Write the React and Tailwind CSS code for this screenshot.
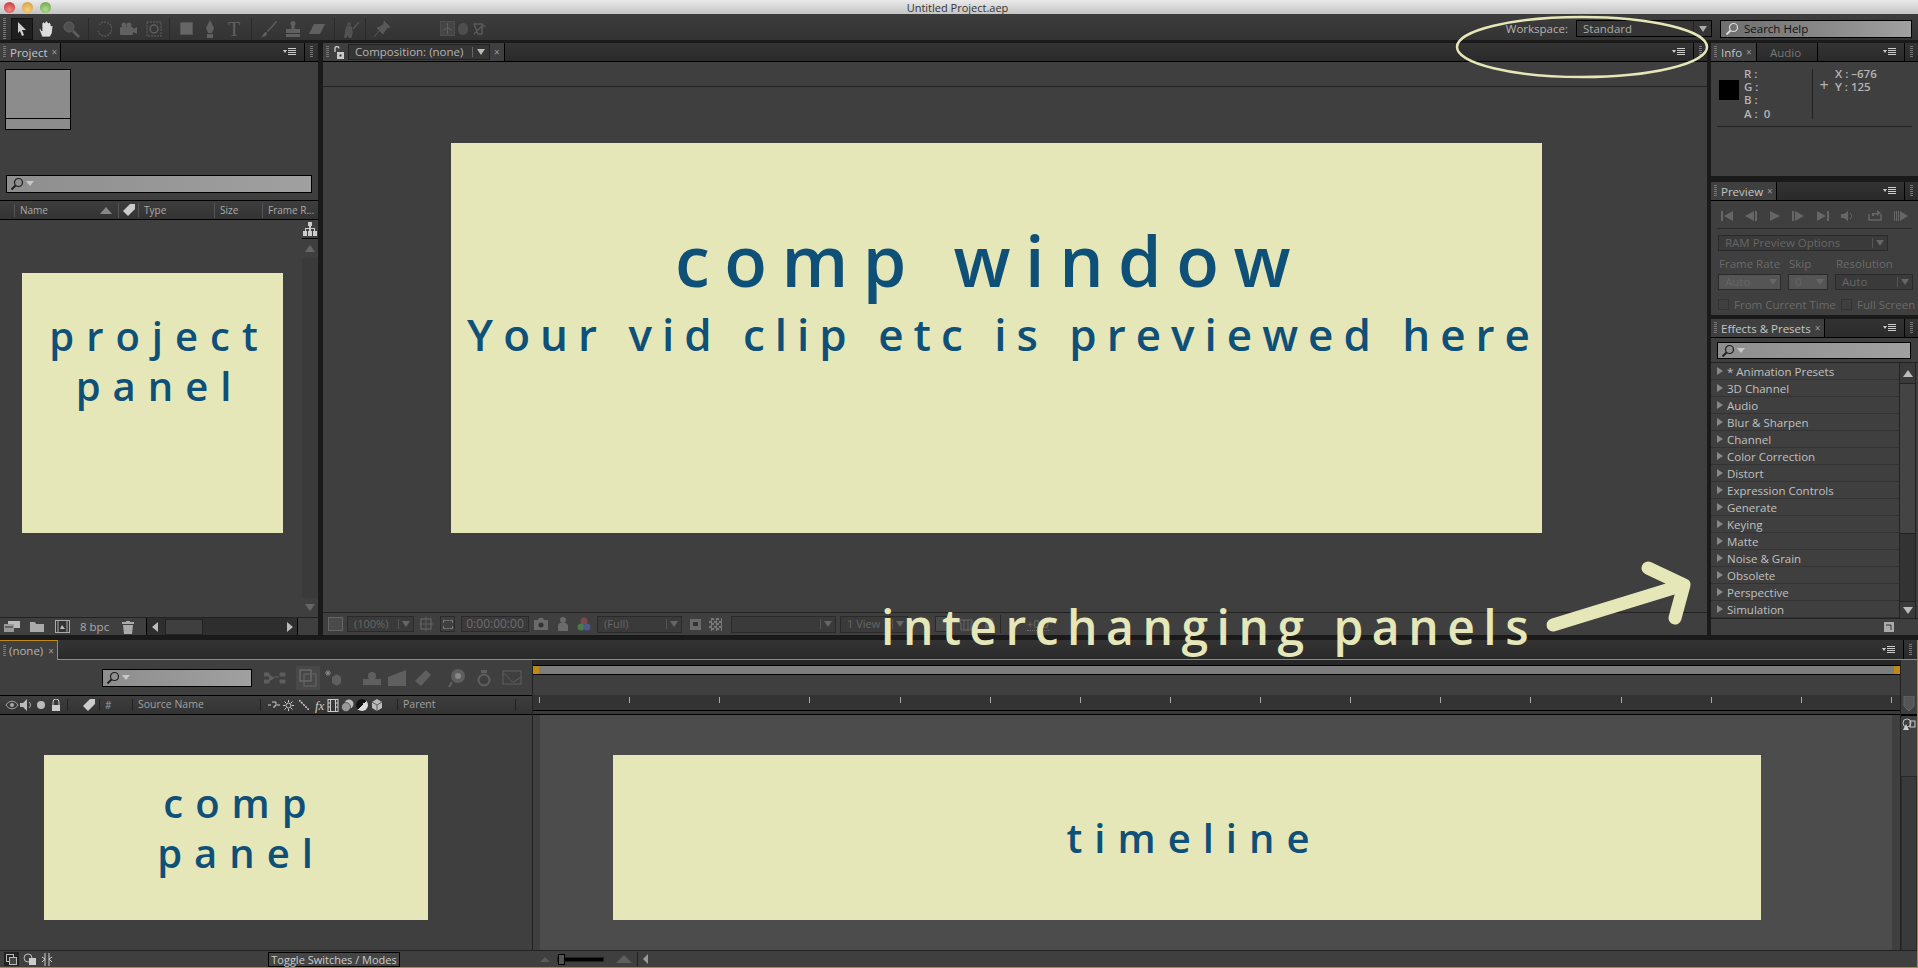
import React from "react";

const effects = ["* Animation Presets", "3D Channel", "Audio", "Blur & Sharpen", "Channel", "Color Correction", "Distort", "Expression Controls", "Generate", "Keying", "Matte", "Noise & Grain", "Obsolete", "Perspective", "Simulation"];
const ticks = Array.from({ length: 16 }, (_, i) => i);

function Grip({ className = "" }) {
  return <div className={"w-[3px] h-[12px] shrink-0 bg-[repeating-linear-gradient(to_bottom,#777_0,#777_1px,transparent_1px,transparent_2px)] " + className} />;
}

function PanelMenu() {
  return (
    <svg width="14" height="8" viewBox="0 0 14 8" className="shrink-0">
      <path d="M0 2h4L2 5z" fill="#ccc" />
      <path d="M5 .5h8M5 2.500h8M5 4.500h8M5 6.500h8" stroke="#ccc" strokeWidth="1" />
    </svg>
  );
}

function Magnifier({ color = "#1c1c1c" }) {
  return (
    <svg width="14" height="14" viewBox="0 0 14 14" className="shrink-0">
      <circle cx="8.500" cy="5.500" r="4" fill="none" stroke={color} strokeWidth="1.200" />
      <path d="M5.500 8.500L1.500 12.500" stroke={color} strokeWidth="1.800" />
    </svg>
  );
}

function SearchField({ className, caret = true, children }) {
  return (
    <div className={"flex items-center pl-[3px] gap-[2px] border border-black bg-gradient-to-r from-[#8e8e8e] to-[#a0a0a0] " + className}>
      <Magnifier />
      {caret && <svg width="8" height="6" viewBox="0 0 8 6"><path d="M0 0h8L4 5z" fill="#c8c8c8" /></svg>}
      {children}
    </div>
  );
}

function Caret({ color = "#8a8a8a", size = 8 }) {
  return <svg width={size} height={size} viewBox="0 0 8 8" className="shrink-0"><path d="M0 1h8L4 7z" fill={color} /></svg>;
}

function Select({ className, label, dim = false, disabled = false }) {
  return (
    <div className={"flex items-center border border-[#2a2a2a] " + (disabled ? "bg-[#555] " : "bg-[#3a3a3a] ") + className}>
      <span className={"flex-1 pl-[6px] truncate " + (dim ? "text-[#666]" : "text-[#aaa]")}>{label}</span>
      <span className="w-px h-[10px] bg-[#555]" />
      <span className="w-[14px] flex justify-center"><Caret color={dim ? "#666" : "#aaa"} /></span>
    </div>
  );
}

function TabBar({ children, menu = true, className = "" }) {
  return (
    <div className={"h-[19px] shrink-0 flex items-stretch bg-gradient-to-b from-[#333] to-[#2a2a2a] border-b border-black " + className}>
      {children}
      <div className="flex-1" />
      {menu && <div className="flex items-center pr-[7px] border-r border-black"><PanelMenu /></div>}
      {menu && <div className="flex items-center px-[5px]"><Grip /></div>}
    </div>
  );
}

function Tab({ label, className = "", active = true }) {
  return (
    <div className={"flex items-center pl-[3px] pr-[4px] border-r border-black " + (active ? "bg-[#3f3f3f] " : "") + className}>
      {active && <Grip className="mr-[4px]" />}
      <span className={"pt-[2px] text-[11.5px] font-medium whitespace-nowrap " + (active ? "text-[#c4c4c4]" : "text-[#777] pl-[10px] pr-[12px]")}>{label}</span>
      {active && <span className="ml-[4px] text-[#999] text-[10px] leading-none">×</span>}
    </div>
  );
}

function Tool({ children, className = "" }) {
  return <div className={"w-[24px] h-[22px] shrink-0 flex items-center justify-center " + className}>{children}</div>;
}

function Sep({ className = "" }) {
  return <div className={"w-px h-[22px] bg-[#2a2a2a] shrink-0 " + className} />;
}

function Toolbar() {
  const d = "#606060";
  return (
    <div className="h-[26px] shrink-0 flex items-center pt-[3px] bg-gradient-to-b from-[#3d3d3d] to-[#333] relative">
      <Grip className="ml-[3px] !h-[22px]" />
      <Tool className="ml-[5px] !w-[22px] bg-[#1f1f1f] border border-[#111]">
        <svg width="12" height="16" viewBox="0 0 12 16"><path d="M2 1l8 8H6l2 5-2 1-2-5-2 2z" fill="#cfcfcf" /></svg>
      </Tool>
      <Tool className="!w-[26px]">
        <svg width="16" height="18" viewBox="0 0 16 18"><path d="M4 17L1 9l1-1 2 3V3l1.500-1L7 3V1.500L8.500 1 10 2v1l1.500-.5L13 4v2l1-.5 1 1-1 7-2 3.500z" fill="#ddd" stroke="#222" strokeWidth=".7" /></svg>
      </Tool>
      <Tool><svg width="18" height="18" viewBox="0 0 18 18"><circle cx="7" cy="7" r="5" fill="#4f4f4f" stroke={d} /><path d="M11 11l6 6" stroke={d} strokeWidth="2.500" /></svg></Tool>
      <Sep className="ml-[5px]" />
      <Tool className="ml-[3px]"><svg width="16" height="16" viewBox="0 0 16 16"><path d="M3 4a7 7 0 1 1-1 6" fill="none" stroke="#555" strokeWidth="1.500" strokeDasharray="2 1" /></svg></Tool>
      <Tool><svg width="18" height="14" viewBox="0 0 18 14"><rect x="1" y="5" width="13" height="8" rx="1" fill={d} /><circle cx="5" cy="3" r="2.500" fill={d} /><circle cx="10" cy="3" r="2.500" fill={d} /><path d="M14 7l4-2v7l-4-2z" fill={d} /></svg></Tool>
      <Tool className="ml-[2px]"><svg width="18" height="18" viewBox="0 0 18 18"><rect x="2" y="2" width="14" height="14" fill="none" stroke={d} strokeDasharray="2 1" /><circle cx="9" cy="9" r="4" fill="none" stroke={d} strokeWidth="1.500" /></svg></Tool>
      <Sep className="ml-[3px]" />
      <Tool className="ml-[4px]"><div className="w-[13px] h-[13px] bg-[#666] border border-[#555]" /></Tool>
      <Tool><svg width="12" height="20" viewBox="0 0 12 20"><path d="M6 1l4 8-2 5H4L2 9z" fill={d} /><rect x="3" y="15" width="6" height="4" fill={d} /></svg></Tool>
      <Tool><span className="text-[20px] leading-none text-[#606060] font-['Liberation_Serif',serif]">T</span></Tool>
      <Sep className="ml-[5px]" />
      <Tool className="ml-[5px]"><svg width="18" height="18" viewBox="0 0 18 18"><path d="M16 1L7 11l1 1 9-10zM6 12c-2 0-2 3-5 5 3 0 6-1 6-4z" fill={d} /></svg></Tool>
      <Tool><svg width="16" height="18" viewBox="0 0 16 18"><circle cx="8" cy="3.500" r="2.500" fill={d} /><rect x="6.500" y="5" width="3" height="4" fill={d} /><rect x="1" y="9" width="14" height="4" fill={d} /><rect x="1" y="14" width="14" height="3" fill={d} /></svg></Tool>
      <Tool><svg width="18" height="12" viewBox="0 0 18 12"><path d="M6 1h11l-5 10H1z" fill={d} /></svg></Tool>
      <Sep className="ml-[5px]" />
      <Tool className="ml-[4px]"><svg width="18" height="18" viewBox="0 0 18 18"><circle cx="7" cy="4" r="2" fill="#505050" /><path d="M5 7h4l1 5-1 5H7l-1-5-2 5H3l1-6zM17 2l-6 7" stroke="#555" strokeWidth="1.500" fill="#505050" /></svg></Tool>
      <Sep className="ml-[2px]" />
      <Tool className="ml-[4px]"><svg width="18" height="18" viewBox="0 0 18 18"><path d="M11 1l6 6-3 1-3 4-1 2-6-6 3-1 4-3zM6 11l-5 6" fill="#585858" stroke="#585858" /></svg></Tool>
      <div className="ml-[46px] w-[15px] h-[15px] border border-[#4e4e4e] bg-[#454545] flex items-center justify-center shrink-0">
        <svg width="11" height="11" viewBox="0 0 12 12"><path d="M6 0v12M1 8l5-3 5 3" stroke="#636363" fill="none" /></svg>
      </div>
      <div className="ml-[3px] w-[10px] h-[12px] rounded-full bg-[#4e4e4e] shrink-0" />
      <svg width="14" height="14" viewBox="0 0 14 14" className="ml-[4px] shrink-0"><path d="M2 2h8v10H6zM10 2l3 3M2 12l8-8" stroke="#595959" fill="none" strokeWidth="1.500" /></svg>

      <div className="flex-1" />
      <span className="text-[#b4b4b4] mr-[8px] text-[11.5px] font-medium">Workspace:</span>
      <div className="w-[136px] h-[17px] flex items-center border border-black bg-[#353535] mr-[8px]">
        <span className="flex-1 pl-[6px] text-[#aaa] text-[11.5px]">Standard</span>
        <span className="w-px h-[15px] bg-[#222]" />
        <span className="w-[17px] flex justify-center"><Caret color="#aaa" /></span>
      </div>
      <div className="w-[192px] h-[18px] flex items-center border border-black bg-gradient-to-r from-[#6e6e6e] to-[#a0a0a0] mr-[6px] pl-[4px]">
        <Magnifier color="#ddd" />
        <span className="ml-[5px] text-[#111] text-[11.5px]">Search Help</span>
      </div>
    </div>
  );
}

function ProjectPanel() {
  return (
    <div className="w-[318px] shrink-0 flex flex-col bg-[#3f3f3f]">
      <TabBar><Tab label="Project" className="w-[61px]" /></TabBar>
      <div className="h-[138px] shrink-0 flex flex-col pl-[5px]">
        <div className="mt-[7px] w-[66px] h-[61px] border border-black bg-[#8c8c8c] flex flex-col justify-end">
          <div className="h-[11px] border-t border-black" />
        </div>
        <SearchField className="mt-[45px] ml-px w-[306px] h-[18px]" />
      </div>
      <div className="h-[20px] shrink-0 flex items-center border-y border-black bg-gradient-to-b from-[#3e3e3e] to-[#333] text-[#aaa] text-[10px]">
        <div className="w-[15px] h-[13px] border-r border-[#555]" />
        <div className="w-[104px] pl-[5px] flex items-center justify-between pr-[6px] border-r border-[#555]">
          <span>Name</span>
          <svg width="12" height="7" viewBox="0 0 12 7"><path d="M6 0l6 7H0z" fill="#888" /></svg>
        </div>
        <div className="w-[20px] flex justify-center border-r border-[#555]">
          <svg width="14" height="14" viewBox="0 0 14 14"><path d="M1 8l7-7h5v5l-7 7z" fill="#ccc" /></svg>
        </div>
        <div className="w-[76px] pl-[5px] border-r border-[#555]">Type</div>
        <div className="w-[48px] pl-[5px] border-r border-[#555]">Size</div>
        <div className="flex-1 pl-[5px] truncate">Frame R...</div>
      </div>
      <div className="flex-1 flex min-h-0">
        <div className="flex-1 pl-[22px] pt-[53px]">
          <div className="w-[261px] h-[260px] bg-[#e5e7b9] text-[#0f5078] font-semibold text-[40px] leading-[50px] tracking-[12px] text-center pl-[14px] pt-[38px] font-['Open_Sans',sans-serif]">
            project<br />panel
          </div>
        </div>
        <div className="w-[16px] shrink-0 flex flex-col">
          <div className="h-[19px] flex items-center justify-center text-[#ccc] border-b border-black">
            <svg width="14" height="14" viewBox="0 0 14 14"><path d="M5 0h4v4H8v2h4v3h2v5h-4V9h1V7H8v2h1v5H5V9h1V7H3v2h1v5H0V9h2V6h4V4H5z" fill="#ccc" /></svg>
          </div>
          <div className="h-[19px] flex items-center justify-center"><svg width="10" height="7" viewBox="0 0 10 7"><path d="M5 0l5 7H0z" fill="#666" /></svg></div>
          <div className="flex-1 bg-[#3a3a3a]" />
          <div className="h-[19px] flex items-center justify-center"><svg width="10" height="7" viewBox="0 0 10 7"><path d="M0 0h10L5 7z" fill="#666" /></svg></div>
        </div>
      </div>
      <div className="h-[18px] shrink-0 flex items-center border-t border-[#222] text-[#aaa] text-[11.5px]">
        <svg width="16" height="13" viewBox="0 0 16 13" className="ml-[4px]"><rect x="4" y="1" width="12" height="7" fill="#bbb" /><rect x="0" y="4" width="10" height="8" fill="#999" /><path d="M1 7h8" stroke="#333" /></svg>
        <svg width="14" height="11" viewBox="0 0 14 11" className="ml-[10px]"><path d="M0 1h5l1 2h8v8H0z" fill="#aaa" /></svg>
        <svg width="15" height="13" viewBox="0 0 15 13" className="ml-[11px]"><rect x=".5" y=".5" width="14" height="12" fill="#333" stroke="#aaa" /><path d="M3 1v11M12 1v11" stroke="#aaa" /><path d="M5 9l2-4 3 4z" fill="#bbb" /></svg>
        <span className="ml-[10px] w-[42px]">8 bpc</span>
        <svg width="12" height="14" viewBox="0 0 12 14"><path d="M4 1h4v1h4v2H0V2h4zM1 5h10l-1 9H2z" fill="#aaa" /></svg>
        <div className="ml-[12px] w-[152px] h-[17px] flex items-center bg-[#2e2e2e] border-x border-black">
          <svg width="6" height="10" viewBox="0 0 6 10" className="ml-[5px]"><path d="M6 0v10L0 5z" fill="#bbb" /></svg>
          <div className="ml-[7px] w-[38px] h-[16px] bg-[#3f3f3f] border border-[#222]" />
          <div className="flex-1" />
          <svg width="6" height="10" viewBox="0 0 6 10" className="mr-[4px]"><path d="M0 0v10l6-5z" fill="#bbb" /></svg>
        </div>
      </div>
    </div>
  );
}

function CompPanel() {
  const d = "#6a6a6a";
  return (
    <div className="w-[1384px] shrink-0 flex flex-col bg-[#3f3f3f]">
      <TabBar>
        <div className="w-[182px] flex items-center bg-[#3f3f3f] border-r border-black pl-[3px]">
          <Grip />
          <svg width="12" height="13" viewBox="0 0 12 13" className="ml-[4px]"><path d="M2 6V2.500a2 2 0 0 1 4 0" fill="none" stroke="#ccc" strokeWidth="1.300" /><rect x="4" y="6" width="7" height="7" fill="#ccc" /><rect x="6.500" y="8.500" width="2" height="2" fill="#333" /></svg>
          <div className="ml-[3px] w-[142px] h-[16px] flex items-center border border-[#222] bg-[#353535]">
            <span className="flex-1 pl-[6px] text-[#b4b4b4] text-[11.5px] whitespace-nowrap">Composition: (none)</span>
            <span className="w-px h-[10px] bg-[#666]" />
            <span className="w-[16px] flex justify-center"><Caret color="#bbb" /></span>
          </div>
          <span className="ml-[4px] text-[#999] text-[10px] leading-none">×</span>
        </div>
      </TabBar>
      <div className="h-[25px] shrink-0 border-b border-[#222]" />
      <div className="flex-1 min-h-0 pl-[128px] pt-[56px] border-b border-[#222]">
        <div className="w-[1091px] h-[390px] bg-[#e5e7b9] text-[#0f5078] text-center font-semibold font-['Open_Sans',sans-serif] pt-[69px]">
          <div className="text-[70px] leading-[96px] tracking-[14.5px] pr-[13px]">comp window</div>
          <div className="text-[44px] leading-[58px] tracking-[10px] whitespace-nowrap -mt-[3px] pl-[14px]">Your vid clip etc is previewed here</div>
        </div>
      </div>
      <div className="h-[22px] shrink-0 flex items-center text-[11px] text-[#6e6e6e]">
        <div className="ml-[5px] w-[15px] h-[14px] border border-[#666] bg-[#4a4a4a]" />
        <Select className="ml-[4px] w-[67px] h-[16px]" label="(100%)" dim />
        <svg width="14" height="14" viewBox="0 0 14 14" className="ml-[5px]"><rect x="2" y="2" width="10" height="10" fill="none" stroke={d} /><path d="M7 0v14M0 7h14" stroke={d} strokeWidth=".7" /></svg>
        <div className="ml-[7px] w-[15px] h-[16px] border border-[#2a2a2a] flex items-center justify-center"><div className="w-[10px] h-[9px] border border-dashed border-[#777]" /></div>
        <div className="ml-[6px] w-[68px] h-[16px] border border-[#2a2a2a] bg-[#3a3a3a] text-[12px] leading-[14px] text-center">0:00:00:00</div>
        <svg width="14" height="12" viewBox="0 0 14 12" className="ml-[5px]"><path d="M0 2h4l1-2h4l1 2h4v10H0z" fill={d} /><circle cx="7" cy="7" r="2.500" fill="#333" /></svg>
        <svg width="10" height="14" viewBox="0 0 10 14" className="ml-[10px]"><circle cx="5" cy="3" r="3" fill={d} /><path d="M0 14V8l2-2h6l2 2v6z" fill={d} /></svg>
        <svg width="14" height="14" viewBox="0 0 14 14" className="ml-[9px]"><circle cx="7" cy="4" r="3.500" fill="#7a4a4a" /><circle cx="4" cy="10" r="3.500" fill="#4a7a4a" /><circle cx="10" cy="10" r="3.500" fill="#4a5a8a" /></svg>
        <Select className="ml-[6px] w-[85px] h-[17px]" label="(Full)" dim />
        <div className="ml-[8px] w-[11px] h-[11px] bg-[#6a6a6a] flex items-center justify-center"><div className="w-[5px] h-[4px] bg-[#333]" /></div>
        <div className="ml-[8px] w-[13px] h-[13px] bg-[conic-gradient(#777_25%,#444_0_50%,#777_0_75%,#444_0)] bg-[length:5px_5px]" />
        <Select className="ml-[9px] w-[105px] h-[17px]" label="" dim />
        <Select className="ml-[4px] w-[68px] h-[17px]" label="1 View" dim />
        <div className="ml-[27px] w-[14px] h-[16px] border border-[#2a2a2a] bg-[#4a4a4a]" />
        <svg width="14" height="14" viewBox="0 0 14 14" className="ml-[10px]"><path d="M1 3h12v3h-1v7H2V6H1zM5 3v10M9 3v10" stroke={d} fill="none" /></svg>
        <div className="ml-[12px] w-[8px] h-[12px] bg-[#555]" />
        <div className="ml-[7px] w-px h-[18px] bg-[#2a2a2a]" />
        <span className="ml-[26px] border-b border-dotted border-[#6e6e6e] leading-[13px]">+0.0</span>
      </div>
    </div>
  );
}

function Transport() {
  const c = "#666";
  return (
    <div className="h-[28px] mx-[6px] flex items-center justify-between border-b border-[#2a2a2a] px-[4px] pt-[2px]">
      <svg width="12" height="10" viewBox="0 0 12 10"><path d="M0 0h2v10H0zM12 0v10L3 5z" fill={c} /></svg>
      <svg width="12" height="10" viewBox="0 0 12 10"><path d="M9 0v10L0 5zM10 0h2v10h-2z" fill={c} /></svg>
      <svg width="10" height="10" viewBox="0 0 10 10"><path d="M0 0l10 5-10 5z" fill={c} /></svg>
      <svg width="12" height="10" viewBox="0 0 12 10"><path d="M0 0h2v10H0zM3 0l9 5-9 5z" fill={c} /></svg>
      <svg width="12" height="10" viewBox="0 0 12 10"><path d="M0 0l9 5-9 5zM10 0h2v10h-2z" fill={c} /></svg>
      <svg width="14" height="10" viewBox="0 0 14 10"><path d="M0 3h3l4-3v10L3 7H0z" fill={c} /><path d="M9 2c2 2 2 4 0 6" stroke={c} fill="none" /></svg>
      <svg width="14" height="11" viewBox="0 0 14 11"><path d="M1 4v6h12V4" stroke={c} fill="none" strokeWidth="1.500" /><path d="M4 6V3h5V0l4 3-4 3V4.500H6V6z" fill={c} /></svg>
      <svg width="14" height="10" viewBox="0 0 14 10"><path d="M0 0h1v10H0zM2 0h1v10H2zM4 0h1v10H4zM6 0l8 5-8 5z" fill={c} /></svg>
    </div>
  );
}

function RightColumn() {
  return (
    <div className="w-[207px] shrink-0 flex flex-col">
      <div className="h-[133px] shrink-0 flex flex-col bg-[#3f3f3f]">
        <TabBar>
          <Tab label="Info" className="w-[46px]" />
          <Tab label="Audio" active={false} />
        </TabBar>
        <div className="mx-[6px] h-[65px] flex items-stretch border-b border-[#222] text-[#b4b4b4] text-[11.5px] font-semibold">
          <div className="w-[20px] h-[20px] bg-black mt-[18px] ml-[2px] shrink-0" />
          <div className="ml-[5px] w-[68px] pt-[5px] leading-[13px]">
            <div>R :</div><div>G :</div><div>B :</div><div className="mt-px">A :&nbsp; 0</div>
          </div>
          <div className="w-px h-[50px] bg-[#222] mt-[7px]" />
          <div className="w-[22px] flex justify-center pt-[15px] font-normal text-[16px] leading-none">+</div>
          <div className="pt-[5px] leading-[13px]"><div>X : –676</div><div>Y : 125</div></div>
        </div>
      </div>
      <div className="h-[133px] mt-[6px] shrink-0 flex flex-col bg-[#3f3f3f] text-[#6a6a6a] text-[11.5px]">
        <TabBar><Tab label="Preview" className="w-[66px]" /></TabBar>
        <Transport />
        <Select className="ml-[7px] mt-[6px] w-[170px] h-[16px]" label="RAM Preview Options" dim />
        <div className="flex ml-[8px] mt-[3px] h-[20px] items-center">
          <span className="w-[70px]">Frame Rate</span><span className="w-[47px]">Skip</span><span>Resolution</span>
        </div>
        <div className="flex ml-[7px]">
          <Select className="w-[63px] h-[16px]" label="Auto" dim disabled />
          <Select className="ml-[7px] w-[40px] h-[16px]" label="0" dim disabled />
          <Select className="ml-[7px] w-[78px] h-[16px]" label="Auto" dim />
        </div>
        <div className="flex items-center ml-[7px] mt-[6px]">
          <div className="w-[11px] h-[11px] border border-[#333]" />
          <span className="ml-[5px] w-[107px] whitespace-nowrap">From Current Time</span>
          <div className="w-[11px] h-[11px] border border-[#333]" />
          <span className="ml-[5px] whitespace-nowrap">Full Screen</span>
        </div>
      </div>
      <div className="h-[316px] mt-[4px] shrink-0 flex flex-col bg-[#3f3f3f]">
        <TabBar><Tab label="Effects & Presets" className="w-[114px]" /></TabBar>
        <div className="h-[25px] shrink-0 pl-[6px] pt-[4px] border-b border-[#222]">
          <SearchField className="w-[194px] h-[17px]" />
        </div>
        <div className="flex h-[255px] shrink-0">
          <div className="w-[188px] flex flex-col">
            {effects.map((name) => (
              <div key={name} className="h-[17px] shrink-0 flex items-center border-b border-[#333] text-[#c0c0c0] text-[11.5px] font-medium">
                <svg width="6" height="8" viewBox="0 0 6 8" className="ml-[6px] mr-[4px] shrink-0"><path d="M0 0l6 4-6 4z" fill="#888" /></svg>
                <span className="pt-[2px]">{name}</span>
              </div>
            ))}
          </div>
          <div className="w-[17px] flex flex-col border-x border-[#222] bg-[#333]">
            <div className="h-[21px] flex items-center justify-center border-b border-[#222] bg-[#3a3a3a]"><svg width="10" height="7" viewBox="0 0 10 7"><path d="M5 0l5 7H0z" fill="#bbb" /></svg></div>
            <div className="h-[150px] bg-[#444] border-b border-[#222]" />
            <div className="flex-1" />
            <div className="h-[17px] flex items-center justify-center border-t border-[#222] bg-[#3a3a3a]"><svg width="10" height="7" viewBox="0 0 10 7"><path d="M0 0h10L5 7z" fill="#bbb" /></svg></div>
          </div>
        </div>
        <div className="flex-1 flex items-center justify-end border-t border-[#222] pr-[24px]">
          <svg width="10" height="10" viewBox="0 0 10 10"><rect width="10" height="10" fill="#aaa" /><path d="M2 3h5v5" stroke="#333" fill="none" /></svg>
        </div>
      </div>
    </div>
  );
}

function Timeline() {
  const d = "#5f5f5f";
  return (
    <div className="h-[328px] shrink-0 flex flex-col bg-[#3f3f3f] border-r border-b border-[#c08a10]">
      <div className="h-[20px] shrink-0 flex items-stretch bg-gradient-to-b from-[#333] to-[#2a2a2a]">
        <div className="w-[58px] flex items-center pl-[3px] bg-[#3f3f3f] border-t border-r border-[#c08a10]">
          <Grip className="mr-[3px]" />
          <span className="text-[#b4b4b4] text-[11.5px] font-medium">(none)</span>
          <span className="ml-[5px] text-[#999] text-[10px] leading-none">×</span>
        </div>
        <div className="flex-1 border-b border-[#c08a10] flex items-stretch justify-end">
          <div className="flex items-center pr-[7px] border-r border-black"><PanelMenu /></div>
          <div className="flex items-center px-[5px]"><Grip /></div>
        </div>
      </div>
      <div className="flex-1 flex min-h-0">
        <div className="w-[533px] shrink-0 flex flex-col border-r border-[#222]">
          <div className="h-[35px] shrink-0 flex items-center">
            <SearchField className="ml-[102px] w-[150px] h-[18px]" />
            <svg width="22" height="14" viewBox="0 0 22 14" className="ml-[12px]"><path d="M0 2h5v3H0zM0 9h5v3H0zM5 4l5 3-5 3M10 6h5M16 2h5v3h-5zM16 9h5v3h-5z" fill={d} stroke={d} /></svg>
            <div className="ml-[10px] w-[24px] h-[24px] bg-[#484848] flex items-center justify-center">
              <svg width="18" height="18" viewBox="0 0 18 18"><rect x="1" y="1" width="11" height="11" fill="none" stroke="#777" /><rect x="5" y="5" width="12" height="12" fill="none" stroke="#666" /></svg>
            </div>
            <svg width="18" height="18" viewBox="0 0 18 18" className="ml-[4px]"><path d="M4 1v6M1 4h6M2 2l4 4M6 2L2 6" stroke="#888" /><path d="M8 8l5-3 4 3v6l-4 3-5-3z" fill={d} /></svg>
            <svg width="20" height="16" viewBox="0 0 20 16" className="ml-[20px]"><circle cx="10" cy="6" r="4" fill={d} /><rect x="1" y="9" width="18" height="6" fill={d} /></svg>
            <svg width="20" height="18" viewBox="0 0 20 18" className="ml-[6px]"><path d="M0 8l18-7v16H0z" fill={d} /></svg>
            <svg width="18" height="18" viewBox="0 0 18 18" className="ml-[6px]"><path d="M12 1l5 5L7 17l-6-5z" fill={d} /></svg>
            <svg width="18" height="20" viewBox="0 0 18 20" className="ml-[16px]"><circle cx="10" cy="8" r="7" fill={d} /><circle cx="10" cy="8" r="3" fill="#888" /><path d="M4 14l-3 5" stroke={d} strokeWidth="2" /></svg>
            <svg width="14" height="18" viewBox="0 0 14 18" className="ml-[11px]"><circle cx="7" cy="11" r="5.500" fill="none" stroke={d} strokeWidth="2" /><rect x="4" y="1" width="6" height="3" fill={d} /></svg>
            <svg width="20" height="16" viewBox="0 0 20 16" className="ml-[11px]"><rect x="1" y="1" width="18" height="13" fill="none" stroke={d} /><path d="M1 4c5 0 6 8 11 8l7-5" stroke={d} fill="none" /></svg>
          </div>
          <div className="h-[20px] shrink-0 flex items-center border-y border-black bg-gradient-to-b from-[#3e3e3e] to-[#333] text-[#a0a0a0] text-[10px]">
            <svg width="14" height="10" viewBox="0 0 14 10" className="ml-[5px]"><path d="M1 5c3-5 9-5 12 0-3 5-9 5-12 0z" fill="none" stroke="#aaa" /><circle cx="7" cy="5" r="2" fill="#aaa" /></svg>
            <svg width="12" height="12" viewBox="0 0 12 12" className="ml-px"><path d="M0 4h3l4-4v12L3 8H0z" fill="#bbb" /><path d="M9 3c2 2 2 4 0 6" stroke="#bbb" fill="none" /></svg>
            <div className="ml-[5px] w-[8px] h-[8px] rounded-full bg-[#bbb]" />
            <svg width="10" height="12" viewBox="0 0 10 12" className="ml-[6px]"><path d="M2 6V3a3 3 0 0 1 6 0v3" fill="none" stroke="#ccc" /><rect x="1" y="6" width="8" height="6" fill="#ccc" /></svg>
            <div className="ml-[6px] w-px h-[12px] bg-[#222]" />
            <svg width="14" height="14" viewBox="0 0 14 14" className="ml-[14px]"><path d="M1 8l7-7h5v5l-7 7z" fill="#ccc" /></svg>
            <div className="ml-[3px] w-px h-[12px] bg-[#222]" />
            <span className="ml-[5px] w-[27px]">#</span>
            <div className="w-px h-[12px] bg-[#222]" />
            <span className="ml-[5px] w-[122px] text-[10.5px]">Source Name</span>
            <div className="w-px h-[12px] bg-[#222]" />
            <svg width="12" height="8" viewBox="0 0 12 8" className="ml-[7px]"><path d="M0 4h3M9 4h3M4 1h4v4H6v2" stroke="#ccc" fill="none" /></svg>
            <svg width="11" height="11" viewBox="0 0 11 11" className="ml-[3px]"><circle cx="5.500" cy="5.500" r="2.500" fill="none" stroke="#ccc" /><path d="M5.500 0v2M5.500 9v2M0 5.500h2M9 5.500h2M1.500 1.500l1.500 1.500M8 8l1.500 1.500M9.500 1.500L8 3M3 8L1.500 9.500" stroke="#ccc" /></svg>
            <svg width="10" height="10" viewBox="0 0 10 10" className="ml-[5px]"><path d="M0 0l10 10" stroke="#ccc" strokeWidth="1.500" strokeDasharray="2 1" /></svg>
            <span className="ml-[6px] w-[12px] text-[#ccc] italic text-[13px] leading-none font-['Liberation_Serif',serif]">fx</span>
            <svg width="12" height="13" viewBox="0 0 12 13"><rect x="1" y=".5" width="10" height="12" fill="none" stroke="#ccc" /><path d="M3.500 0v13M8.500 0v13M1 4h2M1 8h2M9 4h2M9 8h2" stroke="#ccc" /></svg>
            <svg width="13" height="13" viewBox="0 0 13 13" className="ml-[2px]"><circle cx="8" cy="5" r="4.500" fill="#bbb" /><circle cx="5" cy="8" r="4.500" fill="#999" stroke="#333" strokeWidth=".6" /></svg>
            <div className="ml-[2px] w-[12px] h-[12px] rounded-full bg-[linear-gradient(135deg,#111_50%,#ddd_50%)]" />
            <svg width="12" height="12" viewBox="0 0 12 12" className="ml-[3px]"><path d="M6 0l5 3v6l-5 3-5-3V3z" fill="#bbb" /><path d="M1 3l5 3 5-3M6 6v6" stroke="#333" fill="none" strokeWidth=".7" /></svg>
            <div className="ml-[14px] w-px h-[12px] bg-[#222]" />
            <span className="ml-[5px] w-[112px] text-[10.5px]">Parent</span>
            <div className="w-px h-[12px] bg-[#222]" />
          </div>
          <div className="flex-1 min-h-0 pl-[44px] pt-[40px]">
            <div className="w-[384px] h-[165px] bg-[#e5e7b9] text-[#0f5078] font-semibold text-[40px] leading-[50px] tracking-[12px] text-center pl-[10px] pt-[23px] font-['Open_Sans',sans-serif]">
              comp<br />panel
            </div>
          </div>
        </div>
        <div className="flex-1 flex flex-col min-w-0">
          <div className="h-[5px] bg-[#262626] shrink-0" />
          <div className="h-[10px] shrink-0 flex border-y border-black bg-[#7d7d7d] items-stretch justify-between">
            <div className="w-[6px] bg-[#c08a10]" />
            <div className="w-[6px] bg-[#c08a10]" />
          </div>
          <div className="h-[20px] bg-[#3f3f3f] shrink-0" />
          <div className="h-[16px] shrink-0 bg-[#333] flex border-b border-black">
            <div className="flex justify-between w-[1353px] ml-[6px] pt-[2px]">
              {ticks.map((t) => <div key={t} className="w-px h-[6px] bg-[#aaa]" />)}
            </div>
          </div>
          <div className="h-[4px] shrink-0 bg-[#3a3a3a] border-b border-black" />
          <div className="flex-1 min-h-0 ml-[7px] mr-[8px] bg-[#4c4c4c] pl-[73px] pt-[40px]">
            <div className="w-[1148px] h-[165px] bg-[#e5e7b9] text-[#0f5078] font-semibold text-[40px] leading-[165px] tracking-[12px] text-center pl-[14px] font-['Open_Sans',sans-serif]">
              timeline
            </div>
          </div>
        </div>
        <div className="w-[17px] shrink-0 flex flex-col border-l border-[#222]">
          <div className="h-[36px] shrink-0" />
          <div className="h-[18px] flex justify-center shrink-0"><svg width="12" height="15" viewBox="0 0 12 15"><path d="M1 0h10v10l-5 5-5-5z" fill="#555" stroke="#666" /></svg></div>
          <div className="h-[2px] bg-black shrink-0" />
          <div className="h-[16px] flex justify-center items-center shrink-0"><svg width="14" height="13" viewBox="0 0 14 13"><circle cx="5" cy="5" r="4" fill="none" stroke="#bbb" /><rect x="8" y="3" width="5" height="6" fill="none" stroke="#ccc" /><path d="M4 6l3 6H1z" fill="#ccc" /></svg></div>
          <div className="h-[44px] shrink-0" />
          <div className="flex-1 border-x border-[#2a2a2a] border-t bg-[#3a3a3a]" />
        </div>
      </div>
      <div className="h-[17px] shrink-0 flex items-center border-t border-[#222] text-[#ccc] text-[11px]">
        <div className="ml-[4px] w-[15px] h-[14px] bg-[#222] flex items-center justify-center"><svg width="11" height="11" viewBox="0 0 11 11"><rect x=".5" y=".5" width="7" height="7" fill="none" stroke="#bbb" /><rect x="3.500" y="3.500" width="7" height="7" fill="#444" stroke="#bbb" /></svg></div>
        <svg width="14" height="13" viewBox="0 0 14 13" className="ml-[4px]"><circle cx="5" cy="5" r="4" fill="none" stroke="#bbb" /><rect x="6" y="5" width="7" height="7" fill="#ccc" /></svg>
        <svg width="12" height="13" viewBox="0 0 12 13" className="ml-[4px]"><path d="M4 0v13M8 0v13M1 4l3 2-3 3M11 4L8 6l3 3" stroke="#ccc" fill="none" /></svg>
        <div className="ml-[215px] w-[132px] h-[15px] border border-black bg-[#444] text-center leading-[13px] whitespace-nowrap">Toggle Switches / Modes</div>
        <svg width="10" height="5" viewBox="0 0 10 5" className="ml-[140px]"><path d="M0 5l5-5 5 5z" fill="#5a5a5a" /></svg>
        <div className="ml-[7px] w-[47px] h-[5px] bg-black border border-[#222] relative">
          <div className="absolute left-0 -top-[4px] w-[7px] h-[11px] bg-[#555] border border-black" />
        </div>
        <svg width="16" height="8" viewBox="0 0 16 8" className="ml-[12px]"><path d="M0 8l8-8 8 8z" fill="#5f5f5f" /></svg>
        <div className="ml-[5px] w-px h-[15px] bg-[#222]" />
        <svg width="5" height="10" viewBox="0 0 5 10" className="ml-[5px]"><path d="M5 0v10L0 5z" fill="#999" /></svg>
      </div>
    </div>
  );
}

export default function App() {
  return (
    <div className="relative w-[1918px] h-[968px] overflow-hidden flex flex-col bg-[#1a1a1a] text-[11px] font-['Open_Sans',sans-serif]">
      <div className="h-[14px] shrink-0 flex items-center bg-gradient-to-b from-[#eaeaea] to-[#c4c4c4]">
        <div className="ml-[4px] w-[11px] h-[11px] rounded-full bg-[radial-gradient(circle_at_50%_70%,#f08a8a,#c8282c)]" />
        <div className="ml-[7px] w-[11px] h-[11px] rounded-full bg-[radial-gradient(circle_at_50%_70%,#f5d080,#d8962c)]" />
        <div className="ml-[7px] w-[11px] h-[11px] rounded-full bg-[radial-gradient(circle_at_50%_70%,#b0dc90,#5fa03c)]" />
        <div className="flex-1 text-center text-[#333] leading-none pr-[54px]">Untitled Project.aep</div>
      </div>
      <Toolbar />
      <div className="h-[3px] shrink-0" />
      <div className="h-[592px] shrink-0 flex">
        <ProjectPanel />
        <div className="w-[5px] shrink-0" />
        <CompPanel />
        <div className="w-[4px] shrink-0" />
        <RightColumn />
      </div>
      <div className="h-[5px] shrink-0" />
      <Timeline />

      {/* annotations drawn over the screenshot */}
      <svg width="1918" height="968" className="absolute inset-0 pointer-events-none">
        <ellipse cx="1582" cy="47" rx="125" ry="30" fill="none" stroke="#e5e7b9" strokeWidth="2.5" />
        <path d="M1553 625L1680 586M1648 568L1684 585L1675 618" fill="none" stroke="#e5e7b9" strokeWidth="13" strokeLinecap="round" strokeLinejoin="round" />
      </svg>
      <div className="absolute left-[881px] top-[596px] text-[48px] leading-[62px] tracking-[8.5px] font-semibold text-[#e5e7b9] whitespace-nowrap">interchanging panels</div>
    </div>
  );
}
